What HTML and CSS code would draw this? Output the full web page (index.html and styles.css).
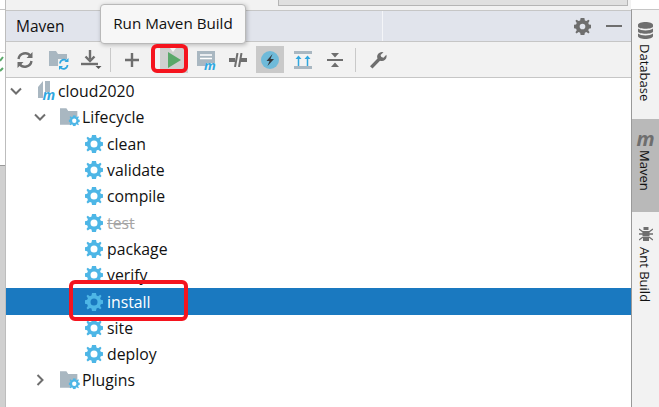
FILE: index.html
```html
<!DOCTYPE html>
<html lang="en">
<head>
<meta charset="utf-8">
<title>Maven</title>
<link rel="stylesheet" href="styles.css">
</head>
<body>
<svg class="defs" width="0" height="0" aria-hidden="true">
  <symbol id="gear" viewBox="0 0 18 18">
    <path fill="#4db6e6" fill-rule="evenodd" d="M7 0h4l.5 2.600 1.600.7L15.300 1.800 16.500 3l-1.400 2.200.7 1.600L18 7.200v3.600l-2.200.5-.7 1.600 1.400 2.100-1.200 1.300-2.200-1.500-1.600.7L11 18H7l-.5-2.400-1.600-.7-2.200 1.500L1.500 15l1.400-2.100-.7-1.600L0 10.800V7.200l2.200-.4.7-1.600L1.500 3l1.200-1.200 2.200 1.500 1.600-.7zM9 5.500a3.500 3.500 0 1 0 0 7 3.500 3.500 0 0 0 0-7z"/>
  </symbol>
  <symbol id="folder-gear" viewBox="0 0 23 21">
    <path fill="#a9b7c1" d="M0 1h7l2 3h10v7h-7v8H0z"/>
    <g transform="translate(9.500 8.500) scale(.68)"><use href="#gear" width="18" height="18"/></g>
  </symbol>
  <symbol id="chev-down" viewBox="0 0 12 8"><path d="M1 1.500l5 5 5-5" fill="none" stroke="#6e6e6e" stroke-width="2"/></symbol>
  <symbol id="chev-right" viewBox="0 0 8 12"><path d="M1.500 1l5 5-5 5" fill="none" stroke="#6e6e6e" stroke-width="2"/></symbol>
</svg>

<div class="app">
  <div class="strip">
    <div class="strip-white"></div>
    <div class="strip-editor">
      <svg width="5" height="22" viewBox="0 0 5 22"><path d="M0 8l3-4M0 18l3-3" stroke="#59a869" stroke-width="2"/></svg>
    </div>
    <div class="strip-grey"></div>
  </div>

  <main class="panel">
    <div class="tabs"><div class="tab"></div></div>
    <header class="head">
      <span class="head-title">Maven</span>
      <span class="head-divider"></span>
      <span class="head-gap"></span>
      <svg class="head-gear" width="17" height="17" viewBox="0 0 18 18"><path fill="#6e6e6e" fill-rule="evenodd" d="M7 0h4l.5 2.600 1.600.7L15.300 1.800 16.500 3l-1.400 2.200.7 1.600L18 7.200v3.600l-2.200.5-.7 1.600 1.400 2.100-1.200 1.300-2.200-1.500-1.600.7L11 18H7l-.5-2.400-1.600-.7-2.200 1.500L1.500 15l1.400-2.100-.7-1.600L0 10.800V7.200l2.200-.4.7-1.600L1.500 3l1.200-1.200 2.200 1.500 1.600-.7zM9 6a3 3 0 1 0 0 6 3 3 0 0 0 0-6z"/></svg>
      <span class="head-min"></span>
    </header>

    <nav class="toolbar">
      <span class="tool t-refresh">
        <svg width="18" height="18" viewBox="0 0 18 18"><path d="M2.500 8A6.700 6.700 0 0 1 14.500 5M15.500 10a6.700 6.700 0 0 1-12 3" fill="none" stroke="#6e6e6e" stroke-width="2.400"/><path d="M16.500 1v6h-6zM1.500 17v-6h6z" fill="#6e6e6e"/></svg>
      </span>
      <span class="tool t-folder">
        <svg width="20" height="20" viewBox="0 0 20 20"><path fill="#a9b7c1" d="M0 1h7l2 3h9v5H9v7H0z"/><path d="M11 13.500a4 4 0 0 1 7-2.500M18.500 15a4 4 0 0 1-7 2.500" fill="none" stroke="#2fa7e0" stroke-width="1.700"/><path d="M19.500 8v4h-4zM10 20v-4h4z" fill="#2fa7e0"/></svg>
      </span>
      <span class="tool t-download">
        <svg width="21" height="19" viewBox="0 0 21 19"><path d="M9 0v9" stroke="#6e6e6e" stroke-width="2.400"/><path d="M4.500 6.500L9 11l4.500-4.500" fill="none" stroke="#6e6e6e" stroke-width="2.400"/><path d="M0 14h17" stroke="#6e6e6e" stroke-width="2.400"/><path d="M14.500 16h6l-3 3z" fill="#555"/></svg>
      </span>
      <span class="sep sep-left"></span>
      <span class="tool t-plus">
        <svg width="14" height="14" viewBox="0 0 14 14"><path d="M7 0v14M0 7h14" stroke="#6e6e6e" stroke-width="2.400"/></svg>
      </span>
      <span class="tool t-run">
        <svg width="13" height="16" viewBox="0 0 13 16"><path d="M0 0l13 8-13 8z" fill="#59a869"/></svg>
      </span>
      <span class="tool t-file">
        <svg width="20" height="26" viewBox="0 -3 20 26"><path fill="#a9b7c1" d="M0 1h18v12H9v3H0z"/><path d="M3 5h12M3 8.500h12" stroke="#fff" stroke-width="1.500"/><text class="m-mark" x="7" y="19.500">m</text></svg>
      </span>
      <span class="tool t-toggle">
        <svg width="18" height="14" viewBox="0 0 18 14"><path d="M0 7h6M12 7h6" stroke="#6e6e6e" stroke-width="4"/><path d="M6 14L8.500 0M10 14l2.500-14" stroke="#6e6e6e" stroke-width="2"/></svg>
      </span>
      <span class="tool t-on">
        <svg width="18" height="18" viewBox="0 0 18 18"><circle cx="9" cy="9" r="9" fill="#6fbad9"/><path d="M11.500 3L5.500 10h3l-2 5L13 8H9.500z" fill="#33383d"/></svg>
      </span>
      <span class="tool t-expand">
        <svg width="18" height="18" viewBox="0 0 18 18"><path d="M0 1.500h18M0 16.500h18" stroke="#a9b7c1" stroke-width="3"/><path d="M4.500 15V7M13.500 15V7" stroke="#2fa7e0" stroke-width="1.500"/><path d="M1.500 8l3-3.500 3 3.500zM10.500 8l3-3.500 3 3.500z" fill="#2fa7e0"/></svg>
      </span>
      <span class="tool t-collapse">
        <svg width="16" height="16" viewBox="0 0 16 16"><path d="M0 8h16" stroke="#6e6e6e" stroke-width="2"/><path d="M4 1h8L8 5.500zM4 15h8L8 10.500z" fill="#6e6e6e"/></svg>
      </span>
      <span class="sep sep-right"></span>
      <span class="tool t-wrench">
        <svg width="18" height="18" viewBox="0 0 18 18"><path d="M1 15.300L8.500 7.500a4.800 4.800 0 0 1 6-6.300L11.500 4l.8 2 2.200.7 2.800-3a4.800 4.800 0 0 1-6.300 6L3.500 17.500z" fill="#6e6e6e"/></svg>
      </span>
    </nav>

    <section class="tree">
      <div class="row lvl0">
        <svg class="arrow" width="12" height="8"><use href="#chev-down"/></svg>
        <svg class="ico-project" width="19" height="26" viewBox="0 -3 19 26"><path fill="#a9b7c1" d="M0 6l5-6v17H0zM7 0h5v11H7z"/><text class="m-mark m-mark-big" x="4.500" y="18.500">m</text></svg>
        <span class="label">cloud2020</span>
      </div>
      <div class="row lvl1">
        <svg class="arrow" width="12" height="8"><use href="#chev-down"/></svg>
        <svg class="ico-folder" width="21" height="20"><use href="#folder-gear"/></svg>
        <span class="label">Lifecycle</span>
      </div>
      <div class="row lvl2"><svg class="ico-gear" width="18" height="18"><use href="#gear"/></svg><span class="label">clean</span></div>
      <div class="row lvl2"><svg class="ico-gear" width="18" height="18"><use href="#gear"/></svg><span class="label">validate</span></div>
      <div class="row lvl2"><svg class="ico-gear" width="18" height="18"><use href="#gear"/></svg><span class="label">compile</span></div>
      <div class="row lvl2"><svg class="ico-gear" width="18" height="18"><use href="#gear"/></svg><span class="label label-off">test</span></div>
      <div class="row lvl2"><svg class="ico-gear" width="18" height="18"><use href="#gear"/></svg><span class="label">package</span></div>
      <div class="row lvl2"><svg class="ico-gear" width="18" height="18"><use href="#gear"/></svg><span class="label">verify</span></div>
      <div class="row lvl2 row-selected"><svg class="ico-gear" width="18" height="18"><use href="#gear"/></svg><span class="label">install</span></div>
      <div class="row lvl2"><svg class="ico-gear" width="18" height="18"><use href="#gear"/></svg><span class="label">site</span></div>
      <div class="row lvl2"><svg class="ico-gear" width="18" height="18"><use href="#gear"/></svg><span class="label">deploy</span></div>
      <div class="row lvl1">
        <svg class="arrow arrow-right" width="8" height="12"><use href="#chev-right"/></svg>
        <svg class="ico-folder" width="21" height="20"><use href="#folder-gear"/></svg>
        <span class="label">Plugins</span>
      </div>
    </section>
  </main>

  <aside class="rail">
    <div class="rail-item rail-db">
      <svg class="rail-ico" width="15" height="17" viewBox="0 0 15 17"><path fill="#6e6e6e" d="M0 3c0-4 15-4 15 0v1.500c0 3-15 3-15 0zM0 6.500c3 2.500 12 2.500 15 0v3c0 3-15 3-15 0zM0 11.500c3 2.500 12 2.500 15 0V14c0 4-15 4-15 0z"/></svg>
      <span class="rail-text">Database</span>
    </div>
    <div class="rail-item rail-maven">
      <span class="rail-m">m</span>
      <span class="rail-text">Maven</span>
    </div>
    <div class="rail-item rail-ant">
      <svg class="rail-ico" width="14" height="16" viewBox="0 0 14 16"><path fill="#6e6e6e" d="M4.500 1h5v3h-5zM3.500 5h7v5h-7zM4 10.500h6V15H4z"/><path d="M0 3l4 3M14 3l-4 3M0 8h4M14 8h-4M0 14l4-3M14 14l-4-3" stroke="#6e6e6e" stroke-width="1.300"/></svg>
      <span class="rail-text">Ant Build</span>
    </div>
  </aside>
</div>

<div class="tooltip">Run Maven Build</div>
<div class="tip-notch"></div>
<div class="mark mark-run"></div>
<div class="mark mark-install"></div>
</body>
</html>
```

FILE: styles.css
```css
* { box-sizing: border-box; }
html, body { margin: 0; padding: 0; }
body {
  width: 659px;
  height: 407px;
  overflow: hidden;
  background: #fff;
  font-family: "Open Sans", "Noto Sans", sans-serif;
  color: #111;
  position: relative;
}
.defs { position: absolute; }
.app { display: flex; width: 659px; height: 407px; }

.strip { width: 6px; display: flex; flex-direction: column; flex: none; border-right: 1px solid #bdbdbd; }
.strip-white { height: 43px; margin-top: 9px; background: #fff; border-top: 1px solid #c4c4c4; }
.strip-editor { height: 113px; background: #fff; border-top: 1px solid #d0d0d0; }
.strip-editor svg { display: block; }
.strip-grey { flex: 1; background: #d0d0d0; border-top: 1px solid #999; }

.panel { flex: 1; min-width: 0; display: flex; flex-direction: column; background: #fff; }
.tabs { height: 10px; background: #f2f2f2; padding-left: 272px; }
.tab { height: 6px; width: 350px; background: #e0e0e0; border: 1px solid #b5b5b5; border-top: 0; }

.head {
  height: 32px;
  background: #e1e4ec;
  border-top: 1px solid #c6c6c6;
  border-bottom: 1px solid #c6c6c6;
  display: flex;
  align-items: center;
  padding: 0 9px 0 10px;
  position: relative;
}
.head-title { font-size: 15.500px; color: #111; }
.head-divider { position: absolute; left: 376px; top: 0; bottom: 0; width: 1px; background: #f4f5f8; }
.head-gap { flex: 1; }
.head-gear { margin-right: 15px; }
.head-min { width: 16px; height: 2px; background: #6e6e6e; }

.toolbar {
  height: 36px;
  background: #f2f2f2;
  border-bottom: 1px solid #c6c6c6;
  display: flex;
  align-items: center;
  padding-left: 5px;
}
.tool { width: 28px; height: 27px; display: flex; align-items: center; justify-content: center; flex: none; }
.t-folder { margin-left: 6px; }
.t-download { margin-left: 4px; }
.t-plus { margin-left: 7px; }
.t-run { margin-left: 14px; background: #cfd0cf; }
.t-file { margin-left: 5px; }
.t-toggle { margin-left: 3px; }
.t-on { margin-left: 4px; background: #c9c9c9; }
.t-expand { margin-left: 5px; }
.t-collapse { margin-left: 4px; }
.t-wrench { margin-left: 8px; }
.sep { width: 1px; height: 24px; background: #c9c9c9; flex: none; }
.sep-left { margin-left: 5px; }
.sep-right { margin-left: 6px; }
.m-mark { font: italic 700 13px "Open Sans", sans-serif; fill: #2fa7e0; }
.m-mark-big { font-size: 14px; }

.tree { flex: 1; background: #fff; }
.row { height: 26.300px; display: flex; align-items: center; }
.lvl0 { padding-left: 4px; }
.lvl1 { padding-left: 28px; }
.lvl2 { padding-left: 79px; }
.arrow { flex: none; }
.lvl0 .arrow { margin-right: 16px; }
.lvl1 .arrow { margin-right: 14px; }
.lvl1 .arrow-right { margin-left: 2px; margin-right: 16px; }
.ico-project { margin-right: 1px; flex: none; }
.ico-folder { margin-right: 1px; flex: none; }
.ico-gear { margin-right: 4px; flex: none; }
.label { font-size: 15.800px; line-height: 20px; color: #111; }
.label-off { color: #a6a6a6; text-decoration: line-through; }
.row-selected { background: #1a79c0; }
.row-selected .label { color: #fff; }

.rail {
  width: 28px;
  flex: none;
  background: #f2f2f2;
  border-left: 1px solid #999;
  margin-top: 9px;
  border-top: 1px solid #c6c6c6;
  display: flex;
  flex-direction: column;
}
.rail-item { display: flex; flex-direction: column; align-items: center; flex: none; }
.rail-db { height: 109px; padding-top: 12px; }
.rail-maven { height: 93px; background: #b9b9b9; padding-top: 12px; }
.rail-ant { padding-top: 14px; }
.rail-text { writing-mode: vertical-rl; font-size: 13px; line-height: 16px; color: #111; margin-top: 5px; margin-right: 2px; }
.rail-m { font: italic 700 20px/16px "Open Sans", sans-serif; color: #6e6e6e; }
.rail-maven .rail-text { margin-top: 3px; }

.tooltip {
  position: absolute;
  left: 100px;
  top: 4px;
  width: 146px;
  height: 40px;
  background: #f7f7f7;
  border: 1px solid #b9b9b9;
  border-radius: 4px;
  box-shadow: 1px 1px 4px rgba(0, 0, 0, .25);
  font-size: 15.200px;
  line-height: 37px;
  text-align: center;
  color: #111;
}
.tip-notch {
  position: absolute;
  left: 167px;
  top: 44px;
  border-left: 6px solid transparent;
  border-right: 6px solid transparent;
  border-top: 8px solid #f7f7f7;
}
.mark { position: absolute; border: 4px solid #f5141e; border-radius: 6px; }
.mark-run { left: 151px; top: 44px; width: 37px; height: 29px; }
.mark-install { left: 69px; top: 280px; width: 119px; height: 41px; }
```
